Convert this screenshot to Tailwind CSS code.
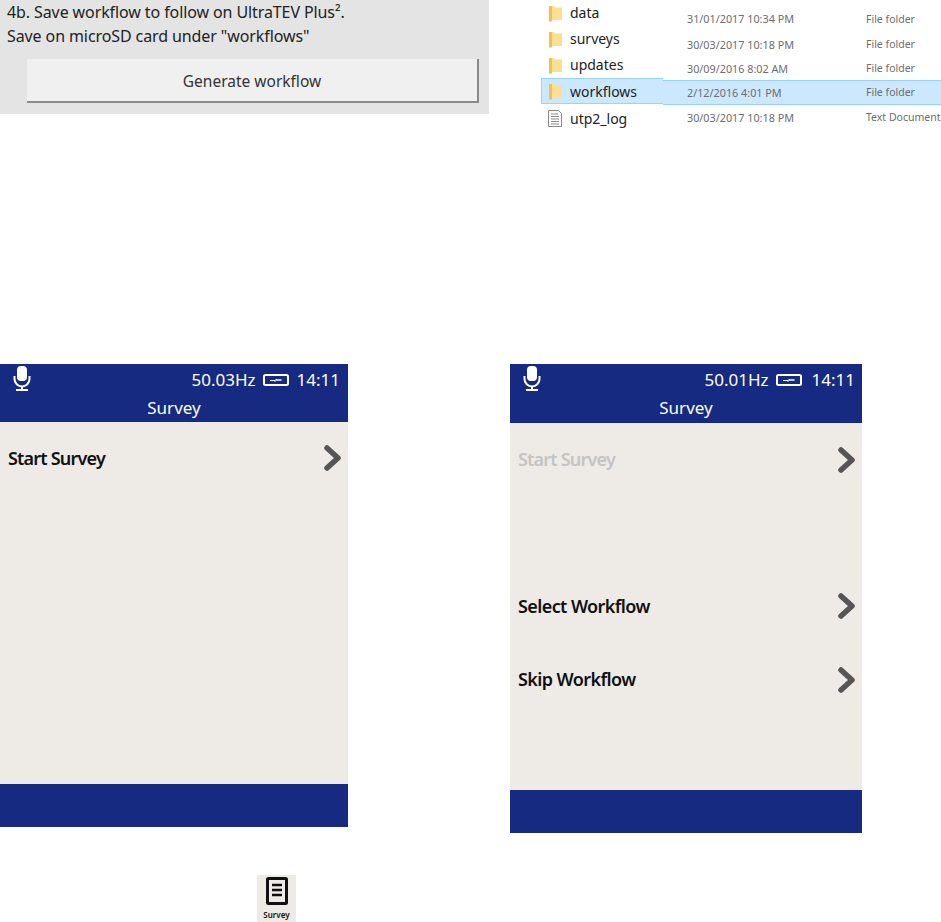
<!DOCTYPE html>
<html><head><meta charset="utf-8"><script src="https://cdn.jsdelivr.net/npm/@tailwindcss/browser@4"></script></head>
<body class="bg-white">
<div class="relative w-[941px] h-[922px] overflow-hidden bg-white font-['Noto_Sans',sans-serif]">

<!-- workflow panel -->
<section class="absolute left-0 top-0 w-[489px] h-[114px] bg-[#e4e4e4] text-[#222] flex flex-col font-['Noto_Sans',sans-serif]">
  <p class="pl-[7px] text-[16px] tracking-[-0.1px] leading-[24px] whitespace-nowrap">4b. Save workflow to follow on UltraTEV Plus².</p>
  <p class="pl-[7px] text-[16px] tracking-[-0.1px] leading-[25px] whitespace-nowrap">Save on microSD card under "workflows"</p>
  <button class="mt-[10px] ml-[27px] w-[452px] h-[44px] bg-[#f0f0f0] border-r-2 border-b-2 border-[#8a8a8a] text-[15.500px] text-[#333] flex items-center justify-center pt-[3px]">Generate workflow</button>
</section>

<!-- file list -->
<section class="absolute left-[541px] top-0 w-[400px] font-['Noto_Sans',sans-serif]">
  <div class="h-[26px] flex items-center">
    <svg class="ml-[8px] w-[13px] h-[17px]" viewBox="0 0 13 17"><path d="M0 1h5l1 1.500h7V15H4l-4 1.500z" fill="#fce08f"/><path d="M0 1h3v15.500l-3 0z" fill="#f2bf50"/></svg>
    <span class="ml-[8px] w-[117px] text-[14px] text-[#222] pb-[2px]">data</span>
    <span class="mt-[13px] w-[179px] text-[10.800px] text-[#6d6d6d] whitespace-nowrap">31/01/2017 10:34 PM</span>
    <span class="mt-[13px] text-[10.500px] text-[#6d6d6d] whitespace-nowrap">File folder</span>
  </div>
  <div class="h-[26px] flex items-center">
    <svg class="ml-[8px] w-[13px] h-[17px]" viewBox="0 0 13 17"><path d="M0 1h5l1 1.500h7V15H4l-4 1.500z" fill="#fce08f"/><path d="M0 1h3v15.500l-3 0z" fill="#f2bf50"/></svg>
    <span class="ml-[8px] w-[117px] text-[14px] text-[#222] pb-[2px]">surveys</span>
    <span class="mt-[12px] w-[179px] text-[10.800px] text-[#6d6d6d] whitespace-nowrap">30/03/2017 10:18 PM</span>
    <span class="mt-[12px] text-[10.500px] text-[#6d6d6d] whitespace-nowrap">File folder</span>
  </div>
  <div class="h-[26px] flex items-center">
    <svg class="ml-[8px] w-[13px] h-[17px]" viewBox="0 0 13 17"><path d="M0 1h5l1 1.500h7V15H4l-4 1.500z" fill="#fce08f"/><path d="M0 1h3v15.500l-3 0z" fill="#f2bf50"/></svg>
    <span class="ml-[8px] w-[117px] text-[14px] text-[#222] pb-[2px]">updates</span>
    <span class="mt-[8px] w-[179px] text-[10.800px] text-[#6d6d6d] whitespace-nowrap">30/09/2016 8:02 AM</span>
    <span class="mt-[8px] text-[10.500px] text-[#6d6d6d] whitespace-nowrap">File folder</span>
  </div>
  <div class="h-[28px] flex items-start">
    <div class="w-[122px] h-[26px] bg-[#cce8ff] border-y border-l border-[#99d1ff] flex items-center">
      <svg class="ml-[7px] w-[13px] h-[17px]" viewBox="0 0 13 17"><path d="M0 1h5l1 1.500h7V15H4l-4 1.500z" fill="#fce08f"/><path d="M0 1h3v15.500l-3 0z" fill="#f2bf50"/></svg>
      <span class="ml-[8px] text-[14px] text-[#222]">workflows</span>
    </div>
    <div class="mt-[2px] flex-1 h-[25px] bg-[#cce8ff] border-y border-[#99d1ff] flex items-center pl-[24px]">
      <span class="mt-[1px] w-[179px] text-[10.800px] text-[#6d6d6d] whitespace-nowrap">2/12/2016 4:01 PM</span>
      <span class="mt-[1px] text-[10.500px] text-[#6d6d6d] whitespace-nowrap">File folder</span>
    </div>
  </div>
  <div class="h-[24px] flex items-center">
    <svg class="ml-[7px] w-[14px] h-[17px]" viewBox="0 0 14 17"><path d="M.5.500h10l3 3v13H.500z" fill="#fff" stroke="#8b8b8b"/><path d="M3 4h7M3 6.500h8M3 9h8M3 11.500h8M3 14h8" stroke="#8b8b8b"/></svg>
    <span class="ml-[8px] w-[117px] text-[14px] text-[#222]">utp2_log</span>
    <span class="w-[179px] text-[10.800px] text-[#6d6d6d] whitespace-nowrap">30/03/2017 10:18 PM</span>
    <span class="text-[10.500px] text-[#6d6d6d] whitespace-nowrap">Text Document</span>
  </div>
</section>

<!-- left device -->
<section class="absolute left-0 top-[364px] w-[348px] h-[463px] bg-[#eeebe6] flex flex-col">
  <header class="h-[58px] bg-[#152a80] text-white relative shrink-0">
    <div class="h-[31px] flex items-center justify-end pr-[8px] text-[17px]">
      <span>50.03Hz</span>
      <svg class="ml-[7px] w-[26px] h-[12px]" viewBox="0 0 26 12"><rect x="1" y="1" width="24" height="10" rx="1.500" fill="none" stroke="#fff" stroke-width="2"/><path d="M7 6.500h5l1.500-1.500v1h5l-5 0-1.500 1.500v-1" stroke="#fff" fill="none"/></svg>
      <span class="ml-[8px]">14:11</span>
    </div>
    <svg class="absolute left-[13px] top-[2px] w-[18px] h-[25px]" viewBox="0 0 18 25"><rect x="4" y="0" width="10" height="15" rx="4" fill="#fff"/><path d="M1.500 10v3a7.500 7.500 0 0 0 15 0v-3" fill="none" stroke="#fff" stroke-width="2"/><path d="M9 20v3M3 24h12" stroke="#fff" stroke-width="2"/></svg>
    <div class="text-center text-[17px] leading-[26px]">Survey</div>
  </header>
  <main class="flex-1 pl-[8px] pr-[6px]">
    <div class="h-[72px] flex items-center justify-between">
      <span class="text-[18px] font-semibold tracking-[-0.8px] text-[#111]">Start Survey</span>
      <svg class="w-[20px] h-[26px]" viewBox="0 0 20 26"><path d="M5 3l11 10L5 23" fill="none" stroke="#555" stroke-width="5.500" stroke-linecap="round" stroke-linejoin="round"/></svg>
    </div>
  </main>
  <footer class="h-[43px] bg-[#152a80] shrink-0"></footer>
</section>

<!-- right device -->
<section class="absolute left-[510px] top-[364px] w-[352px] h-[469px] bg-[#eeebe6] flex flex-col">
  <header class="h-[59px] bg-[#152a80] text-white relative shrink-0">
    <div class="h-[31px] flex items-center justify-end pr-[7px] text-[17px]">
      <span>50.01Hz</span>
      <svg class="ml-[7px] w-[26px] h-[12px]" viewBox="0 0 26 12"><rect x="1" y="1" width="24" height="10" rx="1.500" fill="none" stroke="#fff" stroke-width="2"/><path d="M7 6.500h5l1.500-1.500v1h5l-5 0-1.500 1.500v-1" stroke="#fff" fill="none"/></svg>
      <span class="ml-[10px]">14:11</span>
    </div>
    <svg class="absolute left-[13px] top-[2px] w-[18px] h-[25px]" viewBox="0 0 18 25"><rect x="4" y="0" width="10" height="15" rx="4" fill="#fff"/><path d="M1.500 10v3a7.500 7.500 0 0 0 15 0v-3" fill="none" stroke="#fff" stroke-width="2"/><path d="M9 20v3M3 24h12" stroke="#fff" stroke-width="2"/></svg>
    <div class="text-center text-[17px] leading-[26px]">Survey</div>
  </header>
  <main class="flex-1 pl-[8px] pr-[6px]">
    <div class="h-[74px] flex items-center justify-between">
      <span class="text-[18px] font-semibold tracking-[-0.8px] text-[#c4c4c4] pb-[2px]">Start Survey</span>
      <svg class="w-[20px] h-[26px]" viewBox="0 0 20 26"><path d="M5 3l11 10L5 23" fill="none" stroke="#555" stroke-width="5.500" stroke-linecap="round" stroke-linejoin="round"/></svg>
    </div>
    <div class="mt-[72px] h-[74px] flex items-center justify-between">
      <span class="text-[18px] font-semibold tracking-[-0.6px] text-[#111]">Select Workflow</span>
      <svg class="w-[20px] h-[26px]" viewBox="0 0 20 26"><path d="M5 3l11 10L5 23" fill="none" stroke="#555" stroke-width="5.500" stroke-linecap="round" stroke-linejoin="round"/></svg>
    </div>
    <div class="h-[73px] flex items-center justify-between">
      <span class="text-[18px] font-semibold tracking-[-0.6px] text-[#111]">Skip Workflow</span>
      <svg class="w-[20px] h-[26px]" viewBox="0 0 20 26"><path d="M5 3l11 10L5 23" fill="none" stroke="#555" stroke-width="5.500" stroke-linecap="round" stroke-linejoin="round"/></svg>
    </div>
  </main>
  <footer class="h-[43px] bg-[#152a80] shrink-0"></footer>
</section>

<!-- survey icon -->
<div class="absolute left-[257px] top-[875px] w-[39px] h-[47px] bg-[#eeebe6] flex flex-col items-center">
  <svg class="mt-[2px] w-[22px] h-[28px]" viewBox="0 0 22 28"><rect x="1.500" y="1.500" width="19" height="25" rx="1" fill="#eeebe6" stroke="#111" stroke-width="3"/><path d="M6 8h10M6 13h10M6 18h10" stroke="#111" stroke-width="2.500"/></svg>
  <span class="mt-[5px] text-[8px] leading-[10px] font-semibold text-[#111]">Survey</span>
</div>
</div>
</body></html>
